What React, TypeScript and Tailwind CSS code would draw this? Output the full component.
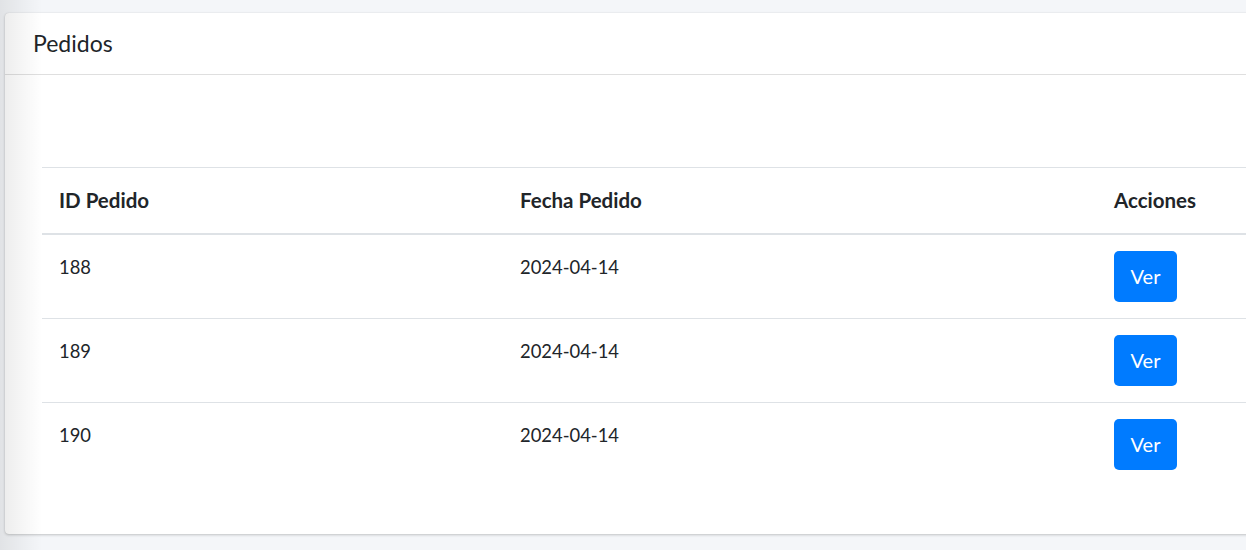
import React from "react";

const rows = [
  { id: "188", date: "2024-04-14" },
  { id: "189", date: "2024-04-14" },
  { id: "190", date: "2024-04-14" },
];

export default function App() {
  return (
    <div
      className="relative w-[1246px] h-[550px] overflow-hidden bg-[#f4f6f9] text-[#212529]"
      style={{ fontFamily: "Lato, 'Noto Sans', sans-serif" }}
    >
      <div className="pt-[13px] pl-[5px]">
        <div className="w-[1300px] rounded-[4px] bg-white shadow-[0_0_1px_rgba(0,0,0,0.125),0_1px_3px_rgba(0,0,0,0.2)]">
          <div className="h-[62px] border-b border-[rgba(0,0,0,0.125)] pl-[28px] flex items-center text-[23px] leading-none">
            Pedidos
          </div>
          <div className="pt-[92px] pl-[37px] pb-[48px]">
            <table className="w-[1258px] border-collapse text-left text-[18.4px]">
              <thead>
                <tr className="border-t border-[#dee2e6]">
                  <th className="w-[461px] h-[66px] px-[17px] border-b-2 border-[#dee2e6] font-bold text-[20.5px] align-middle">ID Pedido</th>
                  <th className="w-[594px] px-[17px] border-b-2 border-[#dee2e6] font-bold text-[20.5px] align-middle">Fecha Pedido</th>
                  <th className="px-[17px] border-b-2 border-[#dee2e6] font-bold text-[20.5px] align-middle">Acciones</th>
                </tr>
              </thead>
              <tbody>
                {rows.map((r, i) => (
                  <tr key={r.id} className={i > 0 ? "border-t border-[#dee2e6]" : ""}>
                    <td className="px-[17px] pt-[16px] pb-[16px] align-top leading-[32px]">{r.id}</td>
                    <td className="px-[17px] pt-[16px] pb-[16px] align-top leading-[32px]">{r.date}</td>
                    <td className="px-[17px] pt-[16px] pb-[16px] align-top">
                      <button className="h-[51px] w-[63px] rounded-[5px] bg-[#007bff] text-white text-[20px] flex items-center justify-center">
                        Ver
                      </button>
                    </td>
                  </tr>
                ))}
              </tbody>
            </table>
          </div>
        </div>
      </div>
      <div className="pointer-events-none absolute left-0 top-0 h-full w-[42px] bg-gradient-to-r from-[rgba(0,0,0,0.08)] to-transparent" />
    </div>
  );
}
